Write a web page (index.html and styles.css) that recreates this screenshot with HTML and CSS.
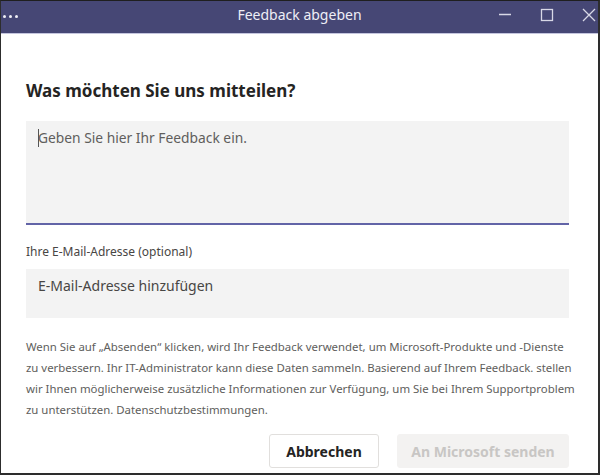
FILE: index.html
```html
<!DOCTYPE html>
<html lang="de">
<head>
<meta charset="utf-8">
<link rel="stylesheet" href="styles.css">
</head>
<body>
<div class="window">
  <div class="titlebar">
    <div class="dots"><span></span><span></span><span></span></div>
    <div class="title">Feedback abgeben</div>
    <div class="controls">
      <svg class="ctl" width="16" height="16" viewBox="0 0 16 16"><line x1="2" y1="7.5" x2="14" y2="7.5" stroke="#d8d8e6" stroke-width="1.5"/></svg>
      <svg class="ctl" width="16" height="16" viewBox="0 0 16 16"><rect x="2.5" y="2.5" width="11" height="11" fill="none" stroke="#d8d8e6" stroke-width="1.3"/></svg>
      <svg class="ctl" width="16" height="16" viewBox="0 0 16 16"><path d="M2 2 L14 14 M14 2 L2 14" stroke="#d8d8e6" stroke-width="1.3"/></svg>
    </div>
  </div>
  <div class="content">
    <h1 class="heading">Was möchten Sie uns mitteilen?</h1>
    <div class="textarea"><span class="cursor"></span><span class="placeholder">Geben Sie hier Ihr Feedback ein.</span></div>
    <div class="label">Ihre E-Mail-Adresse (optional)</div>
    <div class="input">E-Mail-Adresse hinzufügen</div>
    <p class="notice">Wenn Sie auf „Absenden“ klicken, wird Ihr Feedback verwendet, um Microsoft-Produkte und -Dienste<br>zu verbessern. Ihr IT-Administrator kann diese Daten sammeln. Basierend auf Ihrem Feedback. stellen<br>wir Ihnen möglicherweise zusätzliche Informationen zur Verfügung, um Sie bei Ihrem Supportproblem<br>zu unterstützen. Datenschutzbestimmungen.</p>
    <div class="actions">
      <button class="btn btn-secondary">Abbrechen</button>
      <button class="btn btn-primary" disabled>An Microsoft senden</button>
    </div>
  </div>
</div>
</body>
</html>
```
FILE: styles.css
```css
* { box-sizing: border-box; }
html, body { margin: 0; padding: 0; background: #fff; }
body { font-family: "Noto Sans", "Open Sans", sans-serif; color: #252423; }
.window {
  width: 600px; height: 475px;
  border-top: 1px solid #1f1f1f;
  border-left: 1px solid #2d2d2d;
  border-right: 2px solid #2d2d2d;
  border-bottom: 2px solid #2d2d2d;
  display: flex; flex-direction: column;
  overflow: hidden;
}
.titlebar {
  height: 33px;
  background: #464775;
  border-bottom: 1px solid #c4c5de;
  display: flex; align-items: center;
  position: relative;
}
.dots { display: flex; gap: 3px; padding-left: 2px; margin-top: -2px; }
.dots span { width: 3px; height: 3px; border-radius: 50%; background: #f0f0f6; }
.title {
  position: absolute; left: 0; right: 0; top: 0; bottom: 0;
  display: flex; align-items: center; justify-content: center;
  color: #eeeef5; font-size: 14px; padding-left: 0;
  margin-top: -5px;
}
.controls { margin-left: auto; display: flex; gap: 26px; padding-right: 1px; margin-top: -4px; }
.ctl { display: block; }
.content { padding: 0 29px 0 25px; display: flex; flex-direction: column; }
.heading { margin: 45px 0 0 0; font-size: 17px; font-weight: 700; line-height: 24px; color: #252423; }
.textarea {
  margin-top: 18px; height: 104px;
  background: #f3f3f3; border-bottom: 2px solid #6264a7;
  padding: 8px 12px; display: flex; align-items: flex-start;
}
.cursor { width: 1px; height: 18px; background: #555; margin-top: 0; }
.placeholder { font-size: 13.8px; line-height: 17px; color: #605e5c; margin-left: -1px; }
.label { margin-top: 18px; font-size: 12px; line-height: 18px; color: #484644; }
.input {
  margin-top: 8px; height: 49px; background: #f3f3f3;
  padding: 5px 12px; font-size: 14px; line-height: 24px; color: #484644;
}
.notice { margin: 18px 0 0 0; font-size: 11.4px; line-height: 21px; color: #605e5c; white-space: nowrap; }
.actions { margin-top: 14px; display: flex; justify-content: flex-end; gap: 18px; }
.btn {
  height: 34px; font-family: inherit; font-size: 14px; font-weight: 700;
  border-radius: 3px; padding: 0; cursor: default;
}
.btn-secondary { width: 110px; background: #fff; border: 1px solid #e1dfdd; color: #252423; }
.btn-primary { width: 172px; background: #f3f2f1; border: 1px solid #f3f2f1; color: #c8c6c4; }
```
